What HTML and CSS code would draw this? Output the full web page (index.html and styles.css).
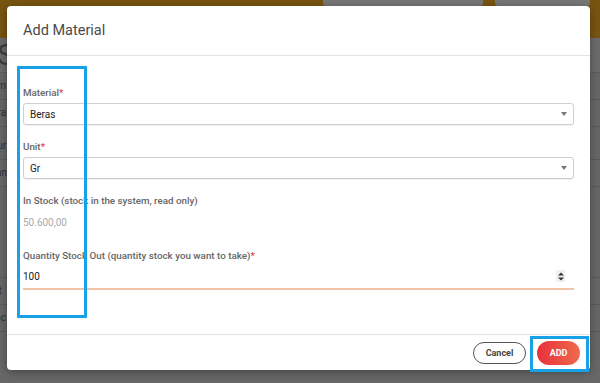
FILE: index.html
```html
<!DOCTYPE html>
<html lang="en">
<head>
    <meta charset="UTF-8">
    <title>Add Material</title>
    <link rel="stylesheet" href="styles.css">
</head>
<body>
    <!-- page behind the dialog (dimmed) -->
    <div class="page">
        <div class="topbar">
            <div class="top-btn wide"></div>
            <div class="top-btn"></div>
        </div>
        <div class="page-title">Stock</div>
        <div class="rows">
            <div class="row">Item</div>
            <div class="row">Bera</div>
            <div class="row gap">Your</div>
            <div class="row">Gram</div>
            <div class="row tall"></div>
            <div class="row">Out</div>
            <div class="row">Stoc</div>
        </div>
    </div>

    <div class="overlay"></div>

    <div class="modal">
        <div class="modal-header">
            <h1>Add Material</h1>
        </div>
        <div class="modal-body">
            <div class="field">
                <label>Material<span class="req">*</span></label>
                <div class="select">
                    <span>Beras</span>
                    <span class="caret"></span>
                </div>
            </div>
            <div class="field">
                <label>Unit<span class="req">*</span></label>
                <div class="select">
                    <span>Gr</span>
                    <span class="caret"></span>
                </div>
            </div>
            <div class="field stock">
                <label>In Stock (stock in the system, read only)</label>
                <div class="readonly">50.600,00</div>
            </div>
            <div class="field last">
                <label>Quantity Stock Out (quantity stock you want to take)<span class="req">*</span></label>
                <div class="number">
                    <span>100</span>
                    <span class="spin">
                        <svg width="8" height="11" viewBox="0 0 8 11">
                            <path d="M1 4.5 L4 1.5 L7 4.5 Z" fill="#333"/>
                            <path d="M1 6.5 L4 9.5 L7 6.5 Z" fill="#333"/>
                        </svg>
                    </span>
                </div>
            </div>
        </div>
        <div class="modal-footer">
            <button class="btn-cancel">Cancel</button>
            <button class="btn-add">ADD</button>
        </div>
    </div>

    <!-- annotation boxes -->
    <div class="mark mark-labels"></div>
    <div class="mark mark-add"></div>
</body>
</html>
```

FILE: styles.css
```css
body {
    margin: 0;
    width: 600px;
    height: 383px;
    overflow: hidden;
    font-family: Roboto, "Liberation Sans", sans-serif;
    background-color: #6a6a6a;
    position: relative;
}
.page {
    height: 383px;
}
.topbar {
    height: 38px;
    background-color: #7b5612;
    display: flex;
    justify-content: flex-end;
    gap: 12px;
    padding-right: 10px;
}
.top-btn {
    width: 95px;
    height: 6px;
    background-color: #7a7a7a;
    border-radius: 0 0 3px 3px;
}
.top-btn.wide {
    width: 160px;
}
.page-title {
    height: 34px;
    line-height: 34px;
    font-size: 30px;
    color: #404040;
    text-indent: -3px;
    background-color: #6e6e6e;
    border-bottom: 1px solid #5e5e5e;
}
.row {
    height: 26px;
    line-height: 26px;
    font-size: 10px;
    color: #333;
    border-bottom: 1px solid #5c5c5c;
    text-indent: -14px;
}
.row.gap {
    margin-top: 6px;
}
.row.tall {
    height: 90px;
}
.overlay {
    position: absolute;
    inset: 0;
    background-color: rgba(0,0,0,0.02);
}
.modal {
    position: absolute;
    left: 7px;
    top: 6px;
    width: 583px;
    height: 364px;
    background-color: white;
    border-radius: 4px;
    box-shadow: 0 2px 8px rgba(0,0,0,0.35);
    display: flex;
    flex-direction: column;
}
.modal-header {
    height: 49px;
    border-bottom: 1px solid #e2e2e2;
    display: flex;
    align-items: center;
    padding-left: 16px;
}
h1 {
    margin: 0;
    font-size: 14.5px;
    font-weight: 400;
    color: #4a4a4a;
}
.modal-body {
    flex: 1;
    padding: 31px 16px 0 16px;
    border-bottom: 1px solid #e2e2e2;
}
.field {
    margin-bottom: 16px;
}
.field.stock {
    margin-top: 1px;
    margin-bottom: 21px;
}
label {
    display: block;
    font-size: 9.8px;
    font-weight: 500;
    color: #666;
    line-height: 12px;
    margin-bottom: 4px;
}
.field.last label {
    margin-bottom: 2px;
}
.req {
    color: #e8404a;
}
.select {
    height: 20px;
    border: 1px solid #cfcfcf;
    border-radius: 3px;
    box-shadow: 0 1px 1px rgba(0,0,0,0.06);
    display: flex;
    align-items: center;
    justify-content: space-between;
    padding: 0 6px 0 6px;
    font-size: 10px;
    color: #222;
}
.caret {
    width: 0;
    height: 0;
    border-left: 3px solid transparent;
    border-right: 3px solid transparent;
    border-top: 4px solid #777;
}
.readonly {
    margin-top: 10px;
    font-size: 10px;
    color: #aaa;
    line-height: 12px;
}
.number {
    height: 24px;
    border-bottom: 2px solid #f0c4a6;
    display: flex;
    align-items: center;
    justify-content: space-between;
    font-size: 10px;
    color: #222;
}
.spin {
    width: 9px;
    height: 12px;
    background-color: #f0f0f0;
    display: flex;
    align-items: center;
    justify-content: center;
    margin-right: 9px;
}
.modal-footer {
    height: 35px;
    display: flex;
    justify-content: flex-end;
    align-items: center;
    gap: 11px;
    padding-right: 10px;
}
button {
    font-family: Roboto, "Liberation Sans", sans-serif;
    font-weight: 700;
    font-size: 9px;
    border-radius: 12px;
    cursor: pointer;
}
.btn-cancel {
    width: 53px;
    height: 22px;
    background-color: white;
    border: 1px solid #555;
    color: #444;
}
.btn-add {
    width: 43px;
    height: 24px;
    border: none;
    color: white;
    background: linear-gradient(90deg, #e8303c, #f06a4c);
}
.mark {
    position: absolute;
    border: 3px solid #17a2e8;
    box-sizing: border-box;
}
.mark-labels {
    left: 17px;
    top: 66px;
    width: 70px;
    height: 252px;
}
.mark-add {
    left: 530px;
    top: 336px;
    width: 59px;
    height: 36px;
}
```
